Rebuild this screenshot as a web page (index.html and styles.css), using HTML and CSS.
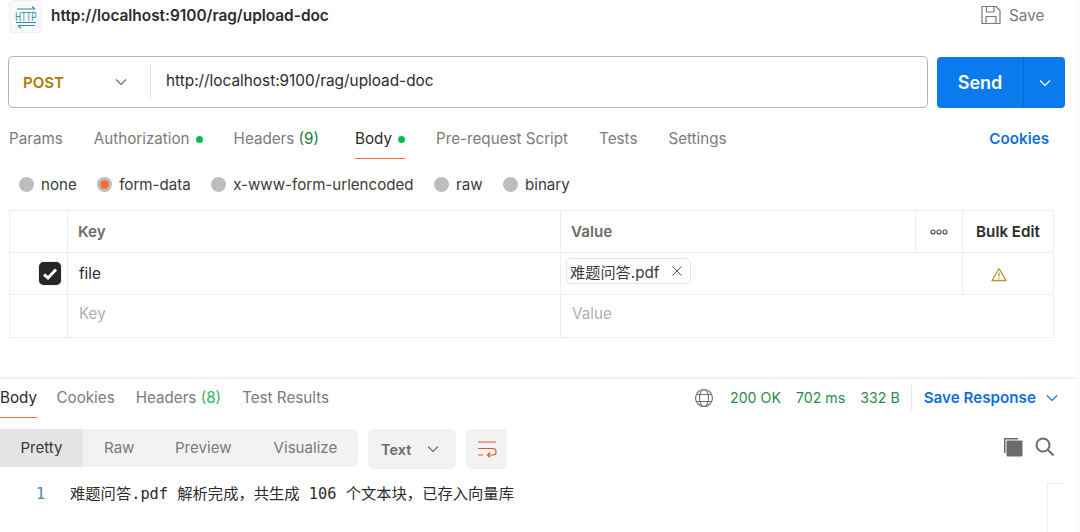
FILE: index.html
```html
<!DOCTYPE html>
<html lang="zh">
<head>
<meta charset="utf-8">
<title>upload-doc</title>
<link rel="stylesheet" href="styles.css">
</head>
<body>
<div class="page">
  <header class="title-bar">
    <div class="http-icon">
      <svg width="24" height="24" viewBox="0 0 24 24" fill="none" stroke="#2f8fa3" stroke-width="1.1">
        <path d="M3 4H21M18 1.500L21 4"/>
        <path d="M4 20.500H21M7 23L4 20.500"/>
        <path d="M2 17.500H22"/>
        <text transform="translate(12 15.800) scale(0.68 1)" text-anchor="middle" class="http-text">HTTP</text>
      </svg>
    </div>
    <div class="req-name">http://localhost:9100/rag/upload-doc</div>
    <div class="save">
      <svg width="20" height="20" viewBox="0 0 20 20" fill="none" stroke="#7a7a7a" stroke-width="1.2">
        <path d="M1 1.500H15L19 5.500V18.500H1Z" stroke-linejoin="round"/>
        <path d="M5.500 1.500V7H13V1.500M5 18.500V11.500H15V18.500"/>
      </svg>
      <span>Save</span>
    </div>
  </header>

  <section class="url-row">
    <div class="url-box">
      <div class="method"><span>POST</span>
        <svg class="chev" width="12" height="12" viewBox="0 0 12 12" fill="none" stroke="#6b6b6b" stroke-width="1.1"><path d="M1 3.500L6 8.500L11 3.500"/></svg>
      </div>
      <div class="url">http://localhost:9100/rag/upload-doc</div>
    </div>
    <div class="send">
      <div class="send-label">Send</div>
      <div class="send-more">
        <svg width="12" height="12" viewBox="0 0 12 12" fill="none" stroke="#fff" stroke-width="1.2"><path d="M1 3.500L6 8.500L11 3.500"/></svg>
      </div>
    </div>
  </section>

  <nav class="tabs">
    <span class="tab">Params</span>
    <span class="tab">Authorization<i class="dot"></i></span>
    <span class="tab t-head">Headers <em>(9)</em></span>
    <span class="tab active">Body<i class="dot"></i></span>
    <span class="tab">Pre-request Script</span>
    <span class="tab">Tests</span>
    <span class="tab">Settings</span>
    <span class="cookies">Cookies</span>
  </nav>

  <div class="radios">
    <label class="radio"><i></i>none</label>
    <label class="radio on"><i></i>form-data</label>
    <label class="radio"><i></i>x-www-form-urlencoded</label>
    <label class="radio"><i></i>raw</label>
    <label class="radio"><i></i>binary</label>
  </div>

  <div class="table">
    <div class="c"></div>
    <div class="c th">Key</div>
    <div class="c th">Value</div>
    <div class="c dots"><svg width="18" height="6" viewBox="0 0 18 6" fill="none" stroke="#444" stroke-width="1.1"><circle cx="3" cy="3" r="2"/><circle cx="9" cy="3" r="2"/><circle cx="15" cy="3" r="2"/></svg></div>
    <div class="c bulk">Bulk Edit</div>

    <div class="c check-cell"><span class="check"><svg width="16" height="14" viewBox="0 0 16 14" fill="none" stroke="#fff" stroke-width="3"><path d="M2 7.500L6 11L14 2.500"/></svg></span></div>
    <div class="c key">file</div>
    <div class="c wide"><span class="chip">难题问答.pdf<svg width="10" height="10" viewBox="0 0 10 10" fill="none" stroke="#555" stroke-width="1"><path d="M0.500 0.500L9.500 9.500M9.500 0.500L0.500 9.500"/></svg></span></div>
    <div class="c warn"><svg width="16" height="15" viewBox="0 0 16 15" fill="none" stroke="#c2902f" stroke-width="1.3"><path d="M8 1.500L15 13.500H1Z" stroke-linejoin="round"/><path d="M8 5.500V9.500M8 10.800V12"/></svg></div>

    <div class="c last"></div>
    <div class="c key ph last">Key</div>
    <div class="c wide2 last">Value</div>
  </div>

  <section class="response">
    <div class="res-tabs">
      <span class="rtab r-body active">Body</span>
      <span class="rtab">Cookies</span>
      <span class="rtab">Headers <em>(8)</em></span>
      <span class="rtab">Test Results</span>
      <div class="status">
        <svg width="20" height="20" viewBox="0 0 20 20" fill="none" stroke="#6e6e6e" stroke-width="1.1"><circle cx="10" cy="10" r="8.500"/><ellipse cx="10" cy="10" rx="4.500" ry="8.500"/><path d="M2.300 6.500H17.700M2.300 13.500H17.700"/></svg>
        <span class="s1">200 OK</span><span class="s2">702 ms</span><span class="s3">332 B</span>
        <i class="sep"></i>
        <span class="save-res">Save Response</span>
        <svg width="12" height="12" viewBox="0 0 12 12" fill="none" stroke="#0f6fd8" stroke-width="1.1"><path d="M1 3.500L6 8.500L11 3.500"/></svg>
      </div>
    </div>

    <div class="toolbar">
      <div class="seg">
        <span class="seg-item sel">Pretty</span>
        <span class="seg-item s-raw">Raw</span>
        <span class="seg-item s-prev">Preview</span>
        <span class="seg-item s-vis">Visualize</span>
      </div>
      <div class="fmt"><span>Text</span>
        <svg width="12" height="12" viewBox="0 0 12 12" fill="none" stroke="#6b6b6b" stroke-width="1.1"><path d="M1 3.500L6 8.500L11 3.500"/></svg>
      </div>
      <div class="wrap">
        <svg width="20" height="18" viewBox="0 0 20 18" fill="none" stroke="#e0552b" stroke-width="1.2"><path d="M1 2H19M1 8.500H16C20 8.500 20 15 16 15H10.500M13 12.500L10.500 15L13 17.500M1 15H6"/></svg>
      </div>
      <div class="tools">
        <svg width="20" height="20" viewBox="0 0 20 20"><path d="M1 1H15V2.500H2.500V16H1Z" fill="#6b6b6b"/><rect x="3.500" y="3.500" width="16" height="16" rx="1" fill="#6b6b6b"/></svg>
        <svg width="20" height="20" viewBox="0 0 20 20" fill="none" stroke="#6b6b6b" stroke-width="2"><circle cx="8" cy="8" r="6.500"/><path d="M13 13L18.500 18.500"/></svg>
      </div>
    </div>

    <div class="code">
      <span class="ln">1</span>
      <span class="line">难题问答.pdf 解析完成，共生成 106 个文本块，已存入向量库</span>
    </div>
    <div class="minimap"></div>
  </section>
</div>
</body>
</html>
```

FILE: styles.css
```css
* { box-sizing: border-box; }
html, body { margin: 0; padding: 0; background: #fff; }
body { font-family: Inter, "Noto Sans CJK SC", sans-serif; color: #6b6b6b; font-size: 15px; overflow: hidden; }
.page { width: 1080px; height: 532px; position: relative; overflow: hidden; border-right: 4px solid #fcfcfc; }

.title-bar { height: 56px; display: flex; align-items: flex-start; padding-left: 9px; }
.http-icon { width: 33px; height: 33px; background: #f9f9f9; border: 1px solid #f0f0f0; border-radius: 4px; display: flex; align-items: center; justify-content: center; }
.http-text { font-family: "Liberation Sans", sans-serif; font-size: 12px; fill: #2f8fa3; stroke: none; }
.req-name { margin: 7px 0 0 9px; font-size: 15.400px; font-weight: 600; color: #2b2b2b; line-height: 18px; }
.save { margin: 5px 0 0 auto; width: 98px; display: flex; align-items: center; gap: 8px; height: 20px; font-size: 15.300px; color: #7b7b7b; padding-left: 3px; }

.url-row { display: flex; height: 52px; padding-left: 8px; gap: 9px; }
.url-box { width: 920px; height: 52px; border: 1px solid #b4b4b4; border-radius: 5px; display: flex; align-items: center; }
.method { width: 142px; height: 34px; border-right: 1px solid #e2e2e2; display: flex; align-items: center; justify-content: space-between; padding: 0 23px 0 14px; color: #ad7a03; font-weight: 600; font-size: 15px; }
.url { padding-left: 15px; font-size: 15.350px; color: #2b2b2b; position: relative; top: -2px; }
.send { width: 128px; height: 51px; margin-top: 1px; border-radius: 4px; background: #097bed; color: #fff; display: flex; align-items: center; }
.send-label { width: 86px; text-align: center; font-size: 18px; font-weight: 600; }
.send-more { flex: 1; height: 100%; border-left: 1px solid #0868cc; display: flex; align-items: center; justify-content: center; }

.tabs { height: 62px; display: flex; align-items: center; padding: 0 27px 0 9px; }
.tab { font-size: 15.200px; color: #7b7b7b; margin-right: 31px; display: flex; align-items: center; white-space: pre; line-height: 20px; }
.tab em, .rtab em { font-style: normal; color: #14803c; }
.t-head { margin-right: 36px; }
.dot { width: 7px; height: 7px; border-radius: 50%; background: #0cbb52; margin-left: 6px; }
.tab.active { color: #2b2b2b; position: relative; }
.tab.active::after { content: ""; position: absolute; left: 0; right: 0; top: 29px; height: 1px; background: #ff6c37; }
.cookies { margin-left: auto; font-size: 15.200px; line-height: 20px; font-weight: 600; color: #0f6fd8; }

.radios { height: 28px; padding-left: 19px; display: flex; align-items: center; }
.radio { display: flex; align-items: center; gap: 7px; font-size: 15.100px; color: #3a3a3a; margin-right: 20.500px; }
.radio i { width: 15px; height: 15px; border-radius: 50%; background: #bdbdbd; position: relative; flex: none; }
.radio.on i::after { content: ""; position: absolute; inset: 3px; border-radius: 50%; background: #ff6c37; }

.table { margin: 12px 0 0 9px; width: 1045px; display: grid; grid-template-columns: 58px 493px 355px 47px 90px; grid-auto-rows: 42px; border: 1px solid #ededed; }
.c { border-right: 1px solid #ededed; border-bottom: 1px solid #ededed; display: flex; align-items: center; padding-left: 10px; min-width: 0; }
.c.last { border-bottom: 0; padding-bottom: 5px; }
.th { font-size: 15.200px; font-weight: 600; color: #6b6b6b; }
.dots { justify-content: center; padding: 0; }
.bulk { font-size: 15.200px; font-weight: 600; color: #2b2b2b; padding: 0; justify-content: center; border-right: 0; }
.check-cell { justify-content: flex-end; padding: 0 6px 0 0; }
.check { width: 22px; height: 23px; background: #262626; border-radius: 5px; display: flex; align-items: center; justify-content: center; box-shadow: 0 0 1px #555; }
.key { font-size: 15.200px; color: #2b2b2b; padding-left: 11px; }
.key.ph { color: #b0b0b0; }
.wide { grid-column: 3 / 5; padding-left: 5px; align-items: flex-start; padding-top: 5px; }
.warn { justify-content: center; padding: 2px 18px 0 0; border-right: 0; }
.wide2 { grid-column: 3 / 6; border-right: 0; color: #b0b0b0; font-size: 15.200px; padding-left: 11px; }
.chip { height: 26px; border: 1px solid #e4e4e4; border-radius: 5px; display: flex; align-items: center; gap: 13px; padding: 0 8px 0 3px; font-size: 15.200px; color: #3a3a3a; }

.response { position: absolute; left: 0; right: 0; top: 377px; bottom: 0; border-top: 2px solid #f2f2f2; }
.res-tabs { height: 37px; display: flex; align-items: center; }
.rtab { font-size: 15.200px; color: #7b7b7b; margin-right: 21px; white-space: pre; position: relative; }
.r-body { margin-right: 19.500px; }
.rtab em { color: #2fb864; }
.rtab.active { color: #2b2b2b; }
.rtab.active::after { content: ""; position: absolute; left: 0; right: 0; top: 29px; height: 1px; background: #ff6c37; }
.status { margin-left: auto; display: flex; align-items: center; height: 100%; width: 382px; font-size: 14.200px; color: #2a8a4b; }
.s1, .s2, .s3 { margin-left: 15px; }
.s1 { margin-left: 16px; }
.sep { width: 1px; height: 26px; background: #e8e8e8; margin: 0 12px 0 11px; }
.save-res { font-size: 15.200px; font-weight: 600; color: #0f6fd8; margin-right: 10px; }

.toolbar { display: flex; align-items: flex-start; margin-top: 13px; }
.seg { width: 358px; height: 38px; background: #f2f2f2; border-radius: 0 6px 6px 0; display: flex; font-size: 15.100px; color: #7b7b7b; }
.seg-item { display: flex; align-items: center; padding-bottom: 2px; }
.seg-item.sel { width: 83px; background: #e4e4e4; color: #3a3a3a; justify-content: center; }
.s-raw { margin-left: 21px; }
.s-prev { margin-left: 40.500px; }
.s-vis { margin-left: 42px; }
.fmt { margin-left: 10px; width: 88px; height: 40px; background: #f2f2f2; border-radius: 5px; display: flex; align-items: center; justify-content: space-between; padding: 0 17px 0 13px; font-size: 14.500px; font-weight: 600; color: #6b6b6b; }
.wrap { margin-left: 10px; width: 41px; height: 40px; background: #f2f2f2; border-radius: 5px; display: flex; align-items: center; justify-content: center; }
.tools { margin-left: auto; width: 73px; height: 36px; display: flex; align-items: center; gap: 12px; }

.code { display: flex; margin-top: 15px; font-family: "DejaVu Sans Mono", "Noto Sans CJK SC", monospace; font-size: 15.300px; line-height: 20px; color: #2b2b2b; white-space: pre; }
.ln { width: 70px; padding-left: 36px; color: #3f8fa8; }
.minimap { position: absolute; left: 1047px; top: 104px; width: 18px; height: 60px; border-left: 1px solid #efefef; border-top: 1px solid #efefef; }
```
